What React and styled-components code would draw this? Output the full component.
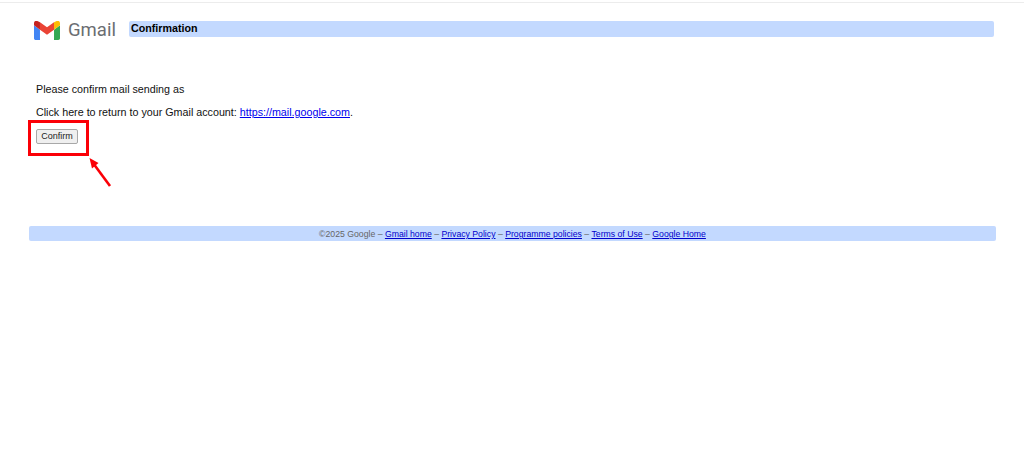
import { createGlobalStyle, styled } from "styled-components";

const GlobalStyle = createGlobalStyle`
  html, body {
    margin: 0;
    padding: 0;
    background: #fff;
    font-family: "Liberation Sans", Arial, sans-serif;
    color: #000;
  }
`;

const Page = styled.div`
  position: relative;
  height: 468px;
  margin-top: 2px;
  padding: 0 28px 0 29px;
  border-top: 1px solid #ececec;
  box-sizing: border-box;
  overflow: hidden;
`;

const Header = styled.div`
  display: flex;
  align-items: flex-start;
  height: 65px;
  padding-top: 15px;
  box-sizing: border-box;
`;

const Logo = styled.div`
  display: flex;
  align-items: center;
  width: 100px;
  height: 24px;
  padding-left: 5px;
  box-sizing: border-box;
  gap: 8px;
`;

const LogoWord = styled.span`
  font-family: "Roboto", sans-serif;
  font-size: 18.5px;
  color: #6b6e72;
`;

const TitleBar = styled.div`
  flex: 1;
  height: 16px;
  margin-top: 3px;
  margin-right: 2px;
  padding-left: 2px;
  background: #c3d9ff;
  border-radius: 2px;
  font-size: 10.7px;
  font-weight: bold;
  line-height: 15px;
`;

const Content = styled.div`
  padding-left: 7px;
  height: 158px;
  box-sizing: border-box;
  padding-top: 14px;
`;

const Line = styled.p`
  margin: 0 0 ${(p) => p.$gap || 0}px;
  font-size: 10.72px;
  line-height: 14px;
  color: #111;
`;

const TextLink = styled.a`
  color: #0000ee;
  text-decoration: underline;
`;

const ConfirmButton = styled.button`
  display: block;
  width: 42px;
  height: 15px;
  margin-top: 10px;
  padding: 0;
  background: #efefef;
  border: 1px solid #a8a8a8;
  border-radius: 2px;
  font-family: "Liberation Sans", sans-serif;
  font-size: 9px;
  line-height: 13px;
  color: #222;
`;

const Footer = styled.div`
  height: 15px;
  background: #c3d9ff;
  border-radius: 2px;
  text-align: center;
  font-size: 8.7px;
  line-height: 16px;
  color: #666;
`;

const FooterLink = styled.a`
  color: #0000cc;
  text-decoration: underline;
`;

const Highlight = styled.div`
  position: absolute;
  left: 28px;
  top: 117px;
  width: 61px;
  height: 36px;
  border: 3px solid #fb0007;
  box-sizing: border-box;
`;

const Arrow = styled.svg`
  position: absolute;
  left: 85px;
  top: 151px;
`;

const links = ["Gmail home", "Privacy Policy", "Programme policies", "Terms of Use", "Google Home"];

const App = () => {
  return (
    <Page>
      <GlobalStyle />
      <Header>
        <Logo>
          <svg width="26" height="19" viewBox="0 0 27 20" preserveAspectRatio="none">
            <path d="M1.8 20h4.4V9.2L0 4.6v13.5C0 19.2.8 20 1.8 20z" fill="#4285f4" />
            <path d="M20.8 20h4.4c1 0 1.8-.8 1.8-1.8V4.6l-6.200 4.600z" fill="#34a853" />
            <path d="M20.800 1.200v8L27 4.600V2.300c0-2.100-2.400-3.300-4.100-2z" fill="#fbbc04" />
            <path d="M6.200 9.200v-8l7.300 5.400 7.300-5.400v8l-7.300 5.400z" fill="#ea4335" />
            <path d="M0 2.300v2.300l6.200 4.600v-8L4.100.3C2.400-1 0 .2 0 2.300z" fill="#c5221f" />
          </svg>
          <LogoWord>Gmail</LogoWord>
        </Logo>
        <TitleBar>Confirmation</TitleBar>
      </Header>
      <Content>
        <Line $gap={9}>Please confirm mail sending as</Line>
        <Line>
          Click here to return to your Gmail account:{" "}
          <TextLink href="#">https://mail.google.com</TextLink>.
        </Line>
        <ConfirmButton type="button">Confirm</ConfirmButton>
      </Content>
      <Footer>
        ©2025 Google
        {links.map((label) => (
          <span key={label}>
            {" – "}
            <FooterLink href="#">{label}</FooterLink>
          </span>
        ))}
      </Footer>
      <Highlight />
      <Arrow width="30" height="36" viewBox="0 0 30 36">
        <path d="M25 32 L8 9" stroke="#fb0007" strokeWidth="2.6" fill="none" />
        <path d="M4.500 4 L13.500 9 L7 14.500 Z" fill="#fb0007" />
      </Arrow>
    </Page>
  );
};

export default App;
